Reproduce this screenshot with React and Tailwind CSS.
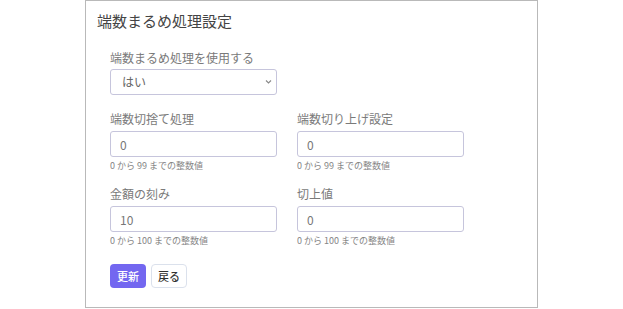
import React from 'react';

const font = { fontFamily: '"Noto Sans CJK JP", "Noto Sans", sans-serif' };

const Field = ({ label, value, hint, className = '' }) => (
  <div className={`flex flex-col ${className}`}>
    <label className="text-[12px] leading-[16px] text-[#7a7a7a] mb-[4px]">{label}</label>
    <input
      readOnly
      value={value}
      className="h-[26px] w-full px-[9px] text-[12px] text-[#777] border border-[#c6c5dc] rounded-[3px] bg-white outline-none"
    />
    {hint && <p className="text-[9px] leading-[12px] mt-[3px] text-[#858585]">{hint}</p>}
  </div>
);

export default function App() {
  return (
    <div className="w-[623px] h-[309px] bg-white" style={font}>
      <div className="ml-[85px] w-[453px] h-[308px] border border-[#b9b9b9] bg-white pt-[10px]">
        <h2 className="pl-[11px] text-[15px] leading-[20px] text-[#444]">端数まるめ処理設定</h2>

        <div className="pl-[24px] mt-[19px]">
          <div className="flex flex-col w-[167px]">
            <label className="text-[12px] leading-[16px] text-[#7a7a7a] mb-[3px]">端数まるめ処理を使用する</label>
            <div className="relative h-[26px] border border-[#c6c5dc] rounded-[3px] flex items-center px-[11px] text-[12px] text-[#666]">
              はい
              <svg className="absolute right-[4px] top-[9px]" width="7" height="6" viewBox="0 0 7 6" fill="none">
                <path d="M1 1.5 L3.5 4 L6 1.5" stroke="#888" strokeWidth="1.1" />
              </svg>
            </div>
          </div>

          <div className="grid grid-cols-[167px_167px] gap-x-[20px] mt-[16px]">
            <Field label="端数切捨て処理" value="0" hint="0 から 99 までの整数値" />
            <Field label="端数切り上げ設定" value="0" hint="0 から 99 までの整数値" />
            <Field className="mt-[14px]" label="金額の刻み" value="10" hint="0 から 100 までの整数値" />
            <Field className="mt-[14px]" label="切上値" value="0" hint="0 から 100 までの整数値" />
          </div>

          <div className="flex gap-[5px] mt-[17px]">
            <button className="h-[24px] w-[36px] rounded-[4px] bg-[#7367f0] text-white text-[11px] font-medium">更新</button>
            <button className="h-[24px] w-[36px] rounded-[4px] bg-white border border-[#dbe1ec] text-[#333] text-[11px] font-medium">戻る</button>
          </div>
        </div>
      </div>
    </div>
  );
}
